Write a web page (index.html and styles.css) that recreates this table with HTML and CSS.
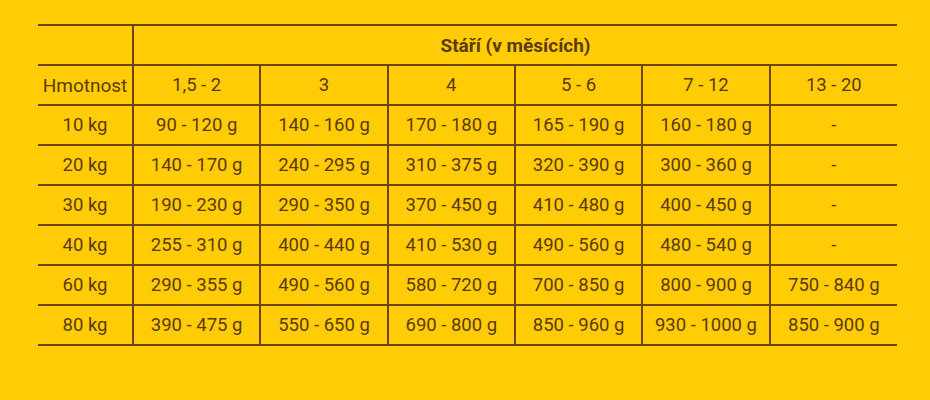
FILE: index.html
```html
<!DOCTYPE html>
<html lang="cs">
<head>
<meta charset="utf-8">
<link rel="stylesheet" href="styles.css">
</head>
<body>
<table class="feed">
  <tr class="row">
    <td class="corner"></td>
    <td class="title" colspan="6">Stáří (v měsících)</td>
  </tr>
  <tr class="row">
    <td class="label">Hmotnost</td>
    <td>1,5 - 2</td><td>3</td><td>4</td><td>5 - 6</td><td>7 - 12</td><td>13 - 20</td>
  </tr>
  <tr class="row">
    <td>10 kg</td><td>90 - 120 g</td><td>140 - 160 g</td><td>170 - 180 g</td><td>165 - 190 g</td><td>160 - 180 g</td><td>-</td>
  </tr>
  <tr class="row">
    <td>20 kg</td><td>140 - 170 g</td><td>240 - 295 g</td><td>310 - 375 g</td><td>320 - 390 g</td><td>300 - 360 g</td><td>-</td>
  </tr>
  <tr class="row">
    <td>30 kg</td><td>190 - 230 g</td><td>290 - 350 g</td><td>370 - 450 g</td><td>410 - 480 g</td><td>400 - 450 g</td><td>-</td>
  </tr>
  <tr class="row">
    <td>40 kg</td><td>255 - 310 g</td><td>400 - 440 g</td><td>410 - 530 g</td><td>490 - 560 g</td><td>480 - 540 g</td><td>-</td>
  </tr>
  <tr class="row">
    <td>60 kg</td><td>290 - 355 g</td><td>490 - 560 g</td><td>580 - 720 g</td><td>700 - 850 g</td><td>800 - 900 g</td><td>750 - 840 g</td>
  </tr>
  <tr class="row">
    <td>80 kg</td><td>390 - 475 g</td><td>550 - 650 g</td><td>690 - 800 g</td><td>850 - 960 g</td><td>930 - 1000 g</td><td>850 - 900 g</td>
  </tr>
</table>
</body>
</html>
```
FILE: styles.css
```css
html, body {
  margin: 0;
  padding: 0;
  background: #ffcc05;
}
body {
  padding: 24px 0 0 38px;
  font-family: Roboto, "Liberation Sans", sans-serif;
  color: #5a3b0e;
}
.feed {
  border-collapse: collapse;
  table-layout: fixed;
  width: 859px;
}
.feed td {
  border-top: 2px solid #6a4412;
  border-bottom: 2px solid #6a4412;
  border-left: 2px solid #6a4412;
  height: 38px;
  padding: 0;
  text-align: center;
  vertical-align: middle;
  font-size: 18.5px;
  white-space: nowrap;
}
.feed td:first-child {
  border-left: none;
  width: 94px;
}
.feed .title {
  font-weight: 700;
  font-size: 19px;
  padding-top: 0;
}
.feed .label {
  font-size: 19px;
}
```
